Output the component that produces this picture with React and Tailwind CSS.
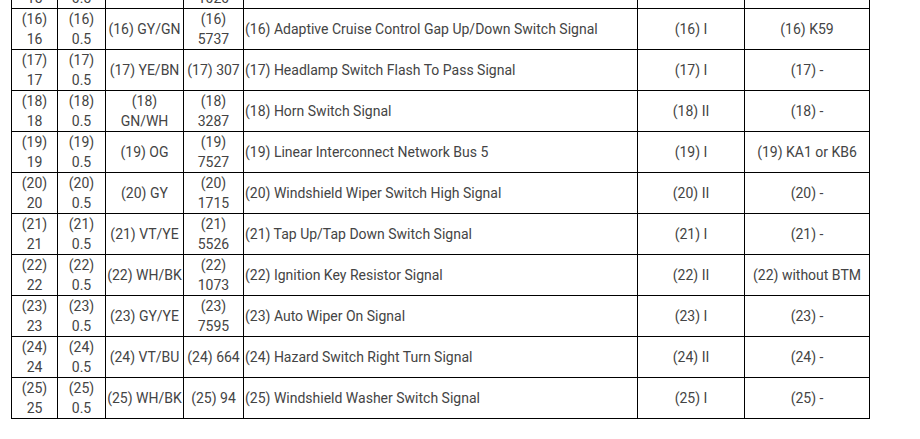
import React from "react";

const rows = [
	["(15)\n15", "(15)\n0.5", "(15) OG", "(15)\n1020", "(15) Windshield Wiper Switch Low Signal", "(15) I", "(15) -"],
	["(16)\n16", "(16)\n0.5", "(16) GY/GN", "(16)\n5737", "(16) Adaptive Cruise Control Gap Up/Down Switch Signal", "(16) I", "(16) K59"],
	["(17)\n17", "(17)\n0.5", "(17) YE/BN", "(17) 307", "(17) Headlamp Switch Flash To Pass Signal", "(17) I", "(17) -"],
	["(18)\n18", "(18)\n0.5", "(18)\nGN/WH", "(18)\n3287", "(18) Horn Switch Signal", "(18) II", "(18) -"],
	["(19)\n19", "(19)\n0.5", "(19) OG", "(19)\n7527", "(19) Linear Interconnect Network Bus 5", "(19) I", "(19) KA1 or KB6"],
	["(20)\n20", "(20)\n0.5", "(20) GY", "(20)\n1715", "(20) Windshield Wiper Switch High Signal", "(20) II", "(20) -"],
	["(21)\n21", "(21)\n0.5", "(21) VT/YE", "(21)\n5526", "(21) Tap Up/Tap Down Switch Signal", "(21) I", "(21) -"],
	["(22)\n22", "(22)\n0.5", "(22) WH/BK", "(22)\n1073", "(22) Ignition Key Resistor Signal", "(22) II", "(22) without BTM"],
	["(23)\n23", "(23)\n0.5", "(23) GY/YE", "(23)\n7595", "(23) Auto Wiper On Signal", "(23) I", "(23) -"],
	["(24)\n24", "(24)\n0.5", "(24) VT/BU", "(24) 664", "(24) Hazard Switch Right Turn Signal", "(24) II", "(24) -"],
	["(25)\n25", "(25)\n0.5", "(25) WH/BK", "(25) 94", "(25) Windshield Washer Switch Signal", "(25) I", "(25) -"],
];

const widths = ["w-[46px]", "w-[48px]", "w-[78px]", "w-[60px]", "w-[394px]", "w-[107px]", "w-[125px]"];

export default function App() {
	return (
		<div className="w-[920px] h-[439px] overflow-hidden bg-white font-['Roboto',sans-serif] text-[14px] leading-[20px] text-[#444]">
			<table className="ml-[11px] -mt-[33px] table-fixed border-collapse w-[859px]">
				<colgroup>
					{widths.map((w, i) => (
						<col key={i} className={w} />
					))}
				</colgroup>
				<tbody>
					{rows.map((row, r) => (
						<tr key={r} className="h-[41px]">
							{row.map((cell, c) => (
								<td
									key={c}
									className={`border border-black px-px py-0 align-middle whitespace-pre-line ${
										c === 4 ? "text-left" : "text-center"
									}`}
								>
									{cell}
								</td>
							))}
						</tr>
					))}
				</tbody>
			</table>
		</div>
	);
}
